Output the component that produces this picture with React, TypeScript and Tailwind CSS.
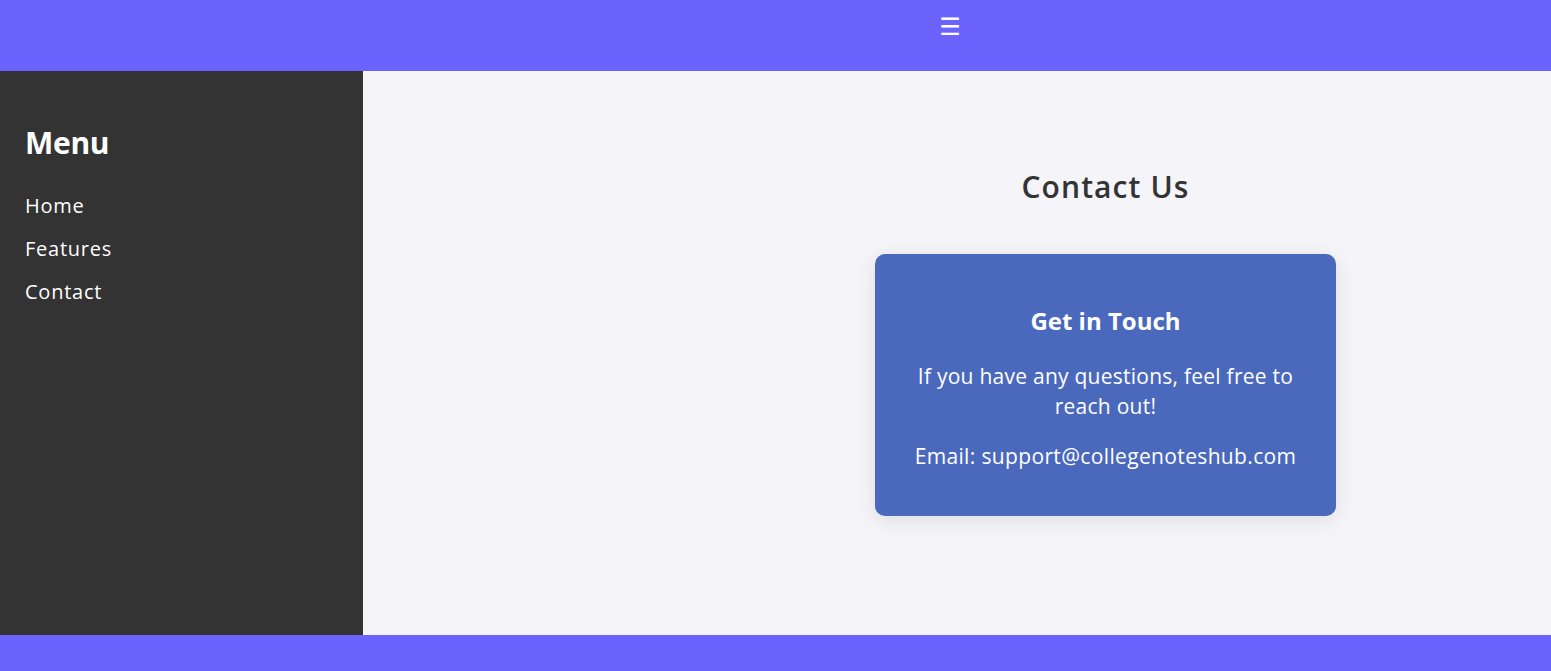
const font = { fontFamily: '"Open Sans", "Noto Sans", sans-serif' }

const links = ['Home', 'Features', 'Contact']

export default function App() {
  return (
    <div className="flex h-[671px] flex-col overflow-hidden bg-[#f4f4f9] text-[#333]" style={font}>
      {/* Top bar */}
      <header className="flex h-[71px] shrink-0 justify-center bg-[#6c63ff] pl-[349px]">
        <span className="mt-[7px] text-[24px] leading-[40px] text-white" style={{ fontFamily: '"DejaVu Sans", sans-serif' }}>
          ☰
        </span>
      </header>

      <div className="flex min-h-0 flex-1">
        {/* Sidebar */}
        <aside className="w-[363px] shrink-0 bg-[#333] px-[25px] pt-[52px] text-white">
          <h2 className="text-[30px] font-bold leading-[40px] tracking-[-0.3px]">Menu</h2>
          <ul className="mt-[28px] flex flex-col gap-[13px]">
            {links.map((l) => (
              <li key={l} className="text-[20px] leading-[30px] tracking-[0.75px]">
                {l}
              </li>
            ))}
          </ul>
        </aside>

        {/* Main */}
        <main className="flex flex-1 flex-col items-center pl-[297px] pt-[96px]">
          <h1 className="text-[30px] font-semibold leading-[40px] tracking-[1.1px] text-[#333]">Contact Us</h1>
          <div className="mt-[47px] w-[461px] rounded-[10px] bg-[#4a69bd] px-[20px] pb-[45px] pt-[49px] text-center text-white shadow-[0_4px_20px_rgba(0,0,0,0.1)]">
            <h3 className="text-[24px] font-bold leading-[36px]">Get in Touch</h3>
            <p className="mt-[22px] text-[21px] leading-[30px] tracking-[0.25px]">
              If you have any questions, feel free to
              <br />
              reach out!
            </p>
            <p className="mt-[20px] text-[21px] leading-[30px] tracking-[0.35px]">Email: support@collegenoteshub.com</p>
          </div>
        </main>
      </div>

      {/* Footer */}
      <footer className="h-[36px] shrink-0 bg-[#6c63ff]" />
    </div>
  )
}
